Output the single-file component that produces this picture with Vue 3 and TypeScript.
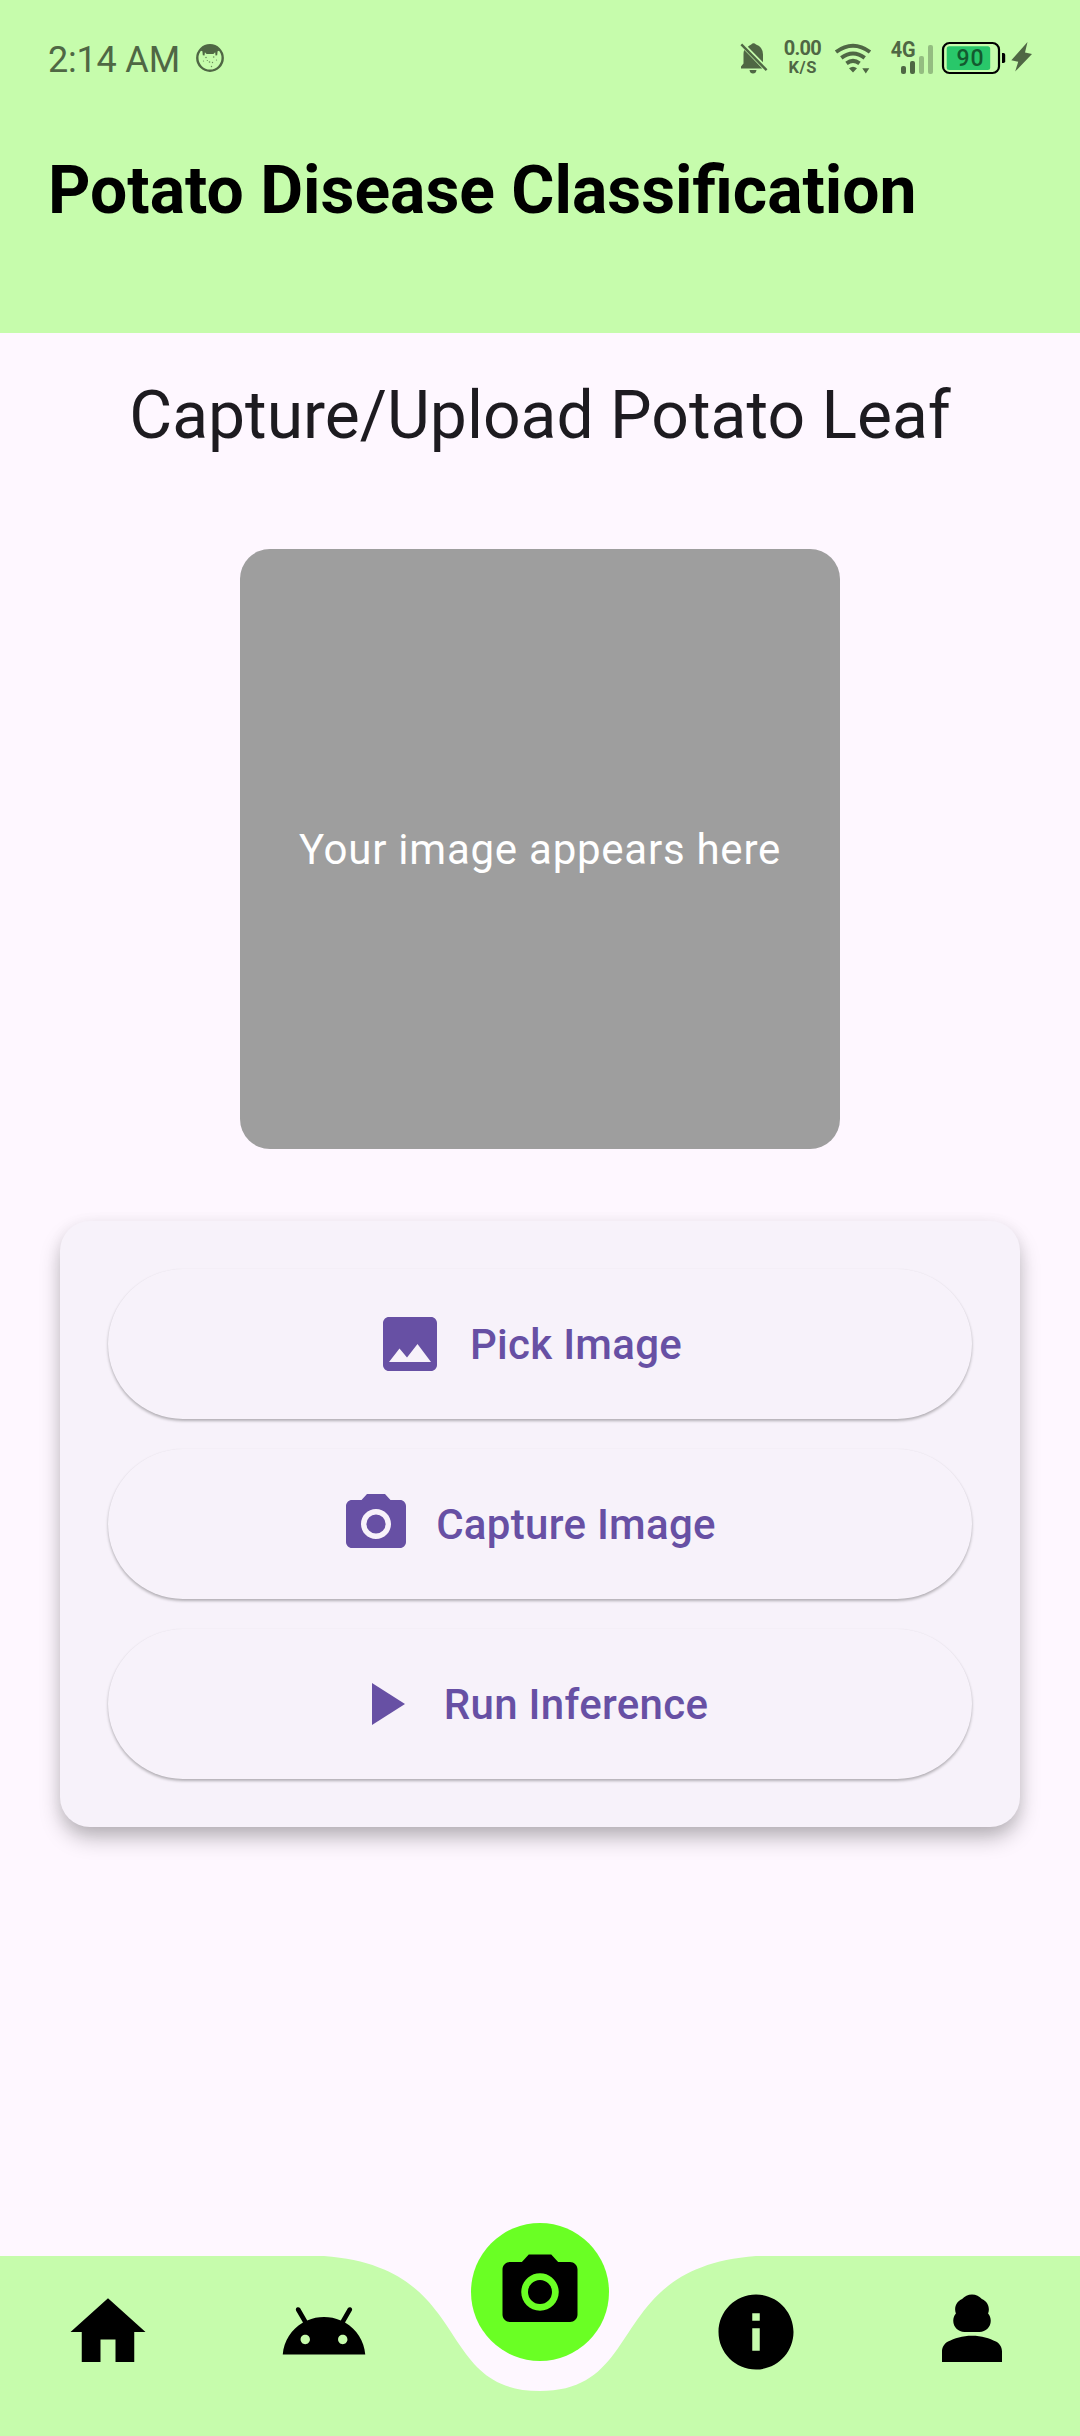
<script setup lang="ts">
interface Action {
  label: string
  icon: string
}

const cameraLens = 'M9 2 7.17 4H4c-1.1 0-2 .9-2 2v12c0 1.1.9 2 2 2h16c1.1 0 2-.9 2-2V6c0-1.1-.9-2-2-2h-3.17L15 2H9zm3 15c-2.76 0-5-2.24-5-5s2.24-5 5-5 5 2.24 5 5-2.24 5-5 5zM15.2 12a3.2 3.2 0 1 1-6.4 0 3.2 3.2 0 0 1 6.4 0z'

const actions: Action[] = [
  {
    label: 'Pick Image',
    icon: 'M21 19V5c0-1.1-.9-2-2-2H5c-1.1 0-2 .9-2 2v14c0 1.1.9 2 2 2h14c1.1 0 2-.9 2-2zM8.5 13.5l2.5 3.01L14.5 12l4.5 6H5l3.5-4.5z',
  },
  { label: 'Capture Image', icon: cameraLens },
  { label: 'Run Inference', icon: 'M8 5v14l11-7z' },
]

const tabs: { name: string; icon: string }[] = [
  { name: 'home', icon: 'M10 20v-6h4v6h5v-8h3L12 3 2 12h3v8z' },
  {
    name: 'android',
    icon: 'M17.6 9.48l1.84-3.18c.16-.31.04-.69-.26-.85-.29-.15-.65-.06-.83.22l-1.88 3.24c-2.86-1.21-6.08-1.21-8.94 0L5.65 5.67c-.19-.29-.58-.38-.87-.2-.28.18-.37.54-.22.83L6.4 9.48C3.3 11.25 1.28 14.44 1 18h22c-.28-3.56-2.3-6.75-5.4-8.52zM7 15.25c-.69 0-1.25-.56-1.25-1.25s.56-1.25 1.25-1.25 1.25.56 1.25 1.25-.56 1.25-1.25 1.25zm10 0c-.69 0-1.25-.56-1.25-1.25s.56-1.25 1.25-1.25 1.25.56 1.25 1.25-.56 1.25-1.25 1.25z',
  },
  { name: 'camera', icon: '' },
  {
    name: 'info',
    icon: 'M12 2C6.48 2 2 6.48 2 12s4.48 10 10 10 10-4.48 10-10S17.52 2 12 2zm1 15h-2v-6h2v6zm0-8h-2V7h2v2z',
  },
  {
    name: 'profile',
    icon: 'M18.39 14.56C16.71 13.7 14.53 13 12 13s-4.71.7-6.39 1.56C4.61 15.07 4 16.1 4 17.22V20h16v-2.78c0-1.12-.61-2.15-1.61-2.66zM10 12h4c1.66 0 3-1.34 3-3 0-.73-.27-1.4-.71-1.92.13-.33.21-.7.21-1.08 0-1.25-.77-2.32-1.86-2.77C14 2.48 13.06 2 12 2s-2 .48-2.64 1.23C8.27 3.68 7.5 4.75 7.5 6c0 .38.08.75.21 1.08C7.27 7.6 7 8.27 7 9c0 1.66 1.34 3 3 3z',
  },
]
</script>

<template>
  <div class="screen">
    <header class="app-bar">
      <div class="status">
        <span class="clock">2:14 AM</span>
        <svg class="face" width="30" height="30" viewBox="0 0 30 30">
          <circle cx="15" cy="15" r="12.7" fill="none" stroke="#4f6744" stroke-width="2.4" />
          <path d="M5.5 7.5Q15-2.5 24.5 7.5L22.6 8.3 22.2 12.2 20.5 12.6 20.2 9.3 18.4 11 11.600 11 9.9 9.3 9.5 12.6 7.8 12.2 7.4 8.3z" fill="#4f6744" />
          <g fill="#4f6744" opacity=".75">
            <circle cx="11" cy="14.5" r=".8" /><circle cx="18.7" cy="14" r=".8" />
            <circle cx="8.5" cy="18" r=".6" /><circle cx="14.5" cy="19" r=".8" />
            <circle cx="17.5" cy="19.5" r=".7" /><circle cx="21.5" cy="17" r=".6" />
            <circle cx="16.5" cy="23.5" r=".7" /><circle cx="12.3" cy="17.5" r=".6" />
          </g>
        </svg>
        <svg class="indicators" width="300" height="44" viewBox="735 36 300 44" fill="#4f6744">
          <path d="M741 68.500V66.500L743.500 63.500V54Q743.500 51.500 744.300 50L762.300 68.500z M747.800 46.800Q749.500 45.300 751.200 44.500Q753.500 42 756 44.500Q763 47 763 54.500V62.300z M749.500 70H756.500Q756 73.500 753 73.500Q750 73.500 749.500 70z" />
          <path d="M741.300 44.400L766.600 70.200" fill="none" stroke="#4f6744" stroke-width="2.400" />
          <text x="802.700" y="55" font-size="20" font-weight="700" text-anchor="middle" textLength="38">0.00</text>
          <text x="802.500" y="73" font-size="16.500" font-weight="700" text-anchor="middle" textLength="28">K/S</text>
          <g fill="none" stroke="#4f6744" stroke-width="4">
            <path d="M836 52Q853 39.600 870 52" />
            <path d="M841.300 57.800Q853 49.300 864.700 57.800" />
            <path d="M846.500 63.300Q853 58.500 859.500 63.300" />
          </g>
          <path d="M849 68.300Q853 65 857 68.300L853 72.400z M862.300 68.300H869.300L865.800 73.500z" />
          <text x="890.700" y="57" font-size="21.500" font-weight="700" textLength="25" lengthAdjust="spacingAndGlyphs">4G</text>
          <rect x="901" y="66" width="5" height="8" rx="2" />
          <rect x="910" y="61" width="5" height="13" rx="2" />
          <rect x="919" y="56" width="5" height="18" rx="2" opacity=".42" />
          <rect x="928" y="45" width="5" height="29" rx="2" opacity=".42" />
          <rect x="943" y="43" width="56" height="30" rx="6.500" fill="none" stroke="#000" stroke-width="2.200" />
          <rect x="946.700" y="46.300" width="43.500" height="23.700" rx="2.500" fill="#29c76a" />
          <path d="M1002 53h1.500q1.700 0 1.700 1.700v6.600q0 1.700-1.700 1.700h-1.500z" fill="#000" />
          <text x="970" y="66" font-size="23" font-weight="500" text-anchor="middle" fill="#135a2f" textLength="27">90</text>
          <path d="M1027.500 42L1011.300 60.200L1018.200 61.700L1015.200 71.500L1032 54L1025 52.500z" />
        </svg>
      </div>
      <h1 class="title">Potato Disease Classification</h1>
    </header>

    <main class="content">
      <h2 class="heading">Capture/Upload Potato Leaf</h2>
      <div class="preview">Your image appears here</div>
      <section class="card">
        <button v-for="action in actions" :key="action.label" class="action" type="button">
          <svg width="72" height="72" viewBox="0 0 24 24"><path :d="action.icon" fill="currentColor" /></svg>
          <span>{{ action.label }}</span>
        </button>
      </section>
    </main>

    <nav class="nav">
      <svg class="nav-shape" width="1080" height="180" viewBox="0 0 1080 180">
        <path d="M0 0H324C475.200 11.250 432 135 540 135S604.800 11.250 756 0H1080V180H0z" fill="#c6fcac" />
      </svg>
      <div class="tabs">
        <div v-for="tab in tabs" :key="tab.name" class="tab">
          <svg v-if="tab.icon" width="90" height="90" viewBox="0 0 24 24"><path :d="tab.icon" /></svg>
        </div>
      </div>
      <div class="fab">
        <svg width="90" height="90" viewBox="0 0 24 24"><path :d="cameraLens" /></svg>
      </div>
    </nav>
  </div>
</template>

<style>
body {
  margin: 0;
}
</style>

<style scoped>
.screen {
  width: 1080px;
  height: 2436px;
  display: flex;
  flex-direction: column;
  background: #fef7ff;
  font-family: Roboto, sans-serif;
  overflow: hidden;
}

.app-bar {
  height: 333px;
  background: #c6fcac;
  flex: none;
}

.status {
  height: 116px;
  padding: 0 45px 0 48px;
  display: flex;
  align-items: center;
}

.clock {
  font-size: 36px;
  line-height: 42px;
  letter-spacing: -0.2px;
  color: #4f6744;
  margin-top: 3px;
  width: 132px;
  white-space: nowrap;
}

.face {
  margin-left: 15px;
}

.indicators {
  margin-left: auto;
}

.title {
  margin: 36px 0 0 48px;
  font-size: 66px;
  line-height: 78px;
  font-weight: 700;
  color: #000;
  white-space: nowrap;
}

.content {
  flex: 1;
  display: flex;
  flex-direction: column;
  align-items: center;
}

.heading {
  margin: 44px 0 0;
  font-size: 66px;
  line-height: 78px;
  font-weight: 400;
  color: #1d1b20;
  white-space: nowrap;
}

.preview {
  margin-top: 94px;
  width: 600px;
  height: 600px;
  border-radius: 30px;
  background: #9e9e9e;
  color: #fff;
  font-size: 42px;
  letter-spacing: 0.75px;
  display: flex;
  align-items: center;
  justify-content: center;
}

.card {
  box-sizing: border-box;
  margin-top: 72px;
  width: 960px;
  padding: 48px;
  display: flex;
  flex-direction: column;
  gap: 30px;
  border-radius: 30px;
  background: #f7f2fa;
  box-shadow: 0 12px 22px -2px rgba(0, 0, 0, 0.28), 0 3px 16px rgba(0, 0, 0, 0.06);
}

.action {
  box-sizing: border-box;
  height: 150px;
  padding: 0 24px 0 0;
  display: flex;
  align-items: center;
  justify-content: center;
  gap: 24px;
  border: none;
  border-radius: 75px;
  background: #f7f2fa;
  color: #6750a4;
  font: 500 42px Roboto, sans-serif;
  letter-spacing: 0.3px;
  box-shadow: 0 2px 3px rgba(0, 0, 0, 0.28), 0 0 1px rgba(0, 0, 0, 0.05);
}

.nav {
  position: relative;
  height: 180px;
  flex: none;
}

.nav-shape {
  position: absolute;
  inset: 0;
}

.tabs {
  position: relative;
  display: flex;
  padding-top: 31px;
}

.tab {
  flex: 1;
  height: 90px;
  display: flex;
  justify-content: center;
}

.fab {
  position: absolute;
  left: 471px;
  top: -33px;
  width: 138px;
  height: 138px;
  border-radius: 50%;
  background: #6aff24;
  display: flex;
  align-items: center;
  justify-content: center;
}
</style>
